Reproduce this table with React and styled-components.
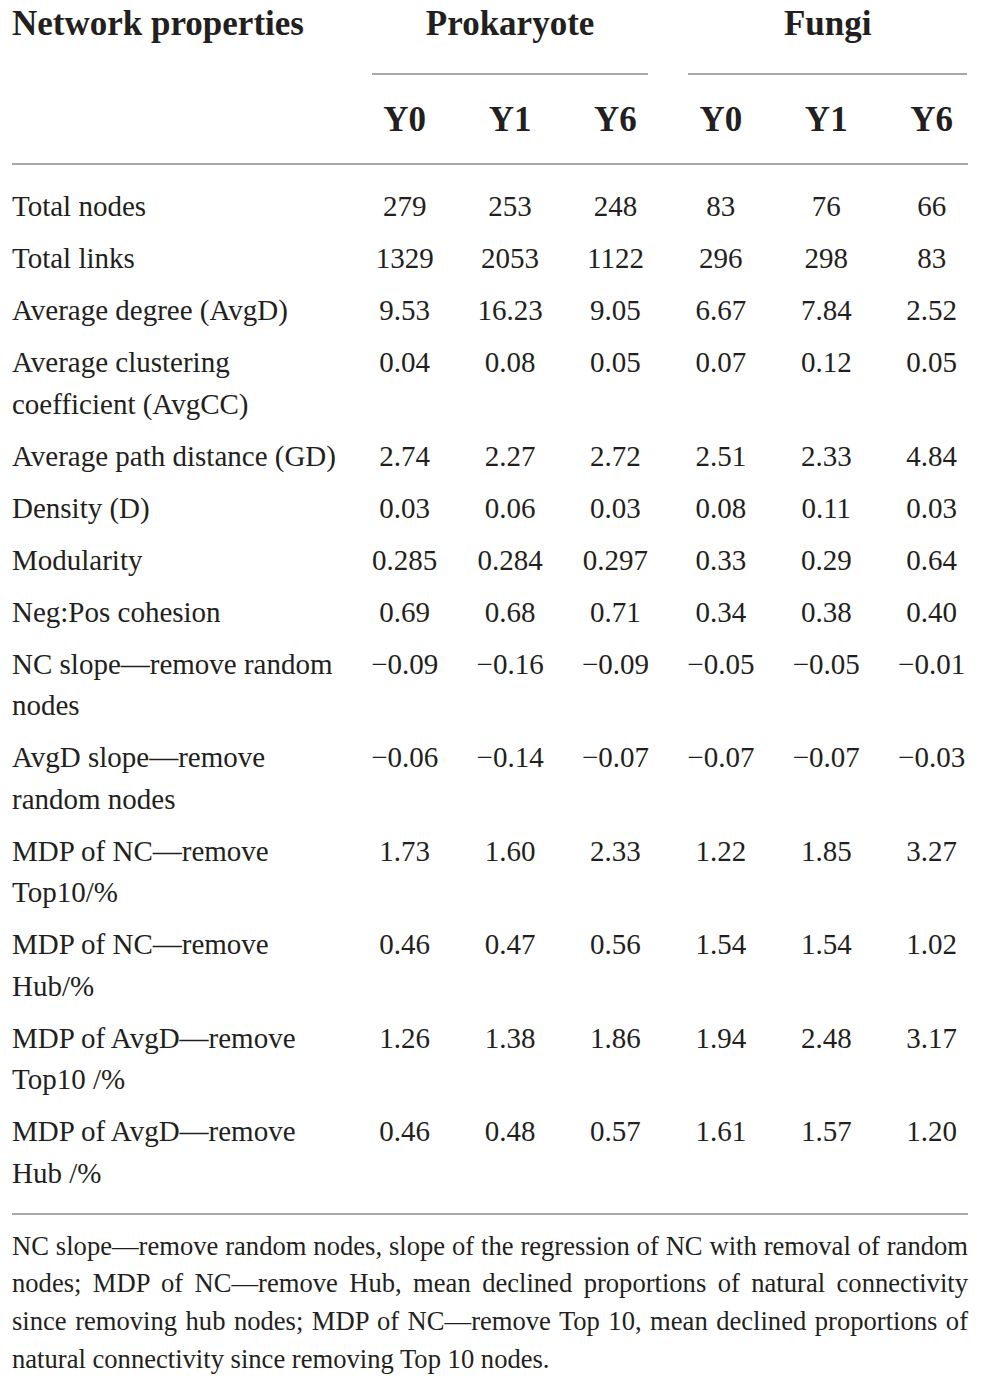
import React from "react";
import styled, { createGlobalStyle } from "styled-components";

const GlobalStyle = createGlobalStyle`
  body {
    margin: 0;
    background: #ffffff;
    color: #231f20;
    font-family: "Liberation Serif", "Times New Roman", serif;
  }
`;

const COLS = "340px repeat(6, 105.4px)";

const Page = styled.div`
  width: 956px;
  padding: 0 14px 0 12px;
`;

const HeadTop = styled.div`
  display: grid;
  grid-template-columns: ${COLS};
  font-weight: 700;
  font-size: 35px;
  line-height: 42px;
`;

const HeadLabel = styled.div`
  padding-top: 3px;
  white-space: nowrap;
`;

const GroupCell = styled.div`
  grid-column: span 3;
  margin: ${(p) => p.$margin};
  padding: 3px 0 28px;
  border-bottom: 2px solid #a8a8a8;
  text-align: center;
`;

const HeadSub = styled.div`
  display: grid;
  grid-template-columns: ${COLS};
  padding: 24px 0 22px;
  border-bottom: 2px solid #a8a8a8;
  font-weight: 700;
  font-size: 35px;
  line-height: 42px;
`;

const YearCell = styled.div`
  text-align: center;
`;

const Body = styled.div`
  padding: 16px 0 13px;
  border-bottom: 2px solid #a8a8a8;
`;

const Row = styled.div`
  display: grid;
  grid-template-columns: ${COLS};
  padding: 5.25px 0;
  font-size: 29px;
  line-height: 41.5px;
`;

const Label = styled.div`
  padding-right: 8px;
`;

const Value = styled.div`
  text-align: center;
  white-space: nowrap;
`;

const Notes = styled.div`
  padding-top: 13px;
  font-size: 26.6px;
  line-height: 37.7px;
`;

const NoteLine = styled.span`
  display: block;
  text-align: ${(p) => (p.$last ? "left" : "justify")};
  text-align-last: ${(p) => (p.$last ? "left" : "justify")};
  white-space: nowrap;
`;

const M = "\u2212";

const rows = [
  ["Total nodes", ["279", "253", "248", "83", "76", "66"]],
  ["Total links", ["1329", "2053", "1122", "296", "298", "83"]],
  ["Average degree (AvgD)", ["9.53", "16.23", "9.05", "6.67", "7.84", "2.52"]],
  ["Average clustering coefficient (AvgCC)", ["0.04", "0.08", "0.05", "0.07", "0.12", "0.05"]],
  ["Average path distance (GD)", ["2.74", "2.27", "2.72", "2.51", "2.33", "4.84"]],
  ["Density (D)", ["0.03", "0.06", "0.03", "0.08", "0.11", "0.03"]],
  ["Modularity", ["0.285", "0.284", "0.297", "0.33", "0.29", "0.64"]],
  ["Neg:Pos cohesion", ["0.69", "0.68", "0.71", "0.34", "0.38", "0.40"]],
  ["NC slope—remove random nodes", [M + "0.09", M + "0.16", M + "0.09", M + "0.05", M + "0.05", M + "0.01"]],
  ["AvgD slope—remove random nodes", [M + "0.06", M + "0.14", M + "0.07", M + "0.07", M + "0.07", M + "0.03"]],
  ["MDP of NC—remove Top10/%", ["1.73", "1.60", "2.33", "1.22", "1.85", "3.27"]],
  ["MDP of NC—remove Hub/%", ["0.46", "0.47", "0.56", "1.54", "1.54", "1.02"]],
  ["MDP of AvgD—remove Top10 /%", ["1.26", "1.38", "1.86", "1.94", "2.48", "3.17"]],
  ["MDP of AvgD—remove Hub /%", ["0.46", "0.48", "0.57", "1.61", "1.57", "1.20"]],
];

const notes = [
  "NC slope—remove random nodes, slope of the regression of NC with removal of random",
  "nodes; MDP of NC—remove Hub, mean declined proportions of natural connectivity",
  "since removing hub nodes; MDP of NC—remove Top 10, mean declined proportions of",
  "natural connectivity since removing Top 10 nodes.",
];

const years = ["Y0", "Y1", "Y6", "Y0", "Y1", "Y6"];

export default function App() {
  return (
    <>
      <GlobalStyle />
      <Page>
        <HeadTop>
          <HeadLabel>Network properties</HeadLabel>
          <GroupCell $margin="0 20px">Prokaryote</GroupCell>
          <GroupCell $margin="0 17px 0 20px">Fungi</GroupCell>
        </HeadTop>
        <HeadSub>
          <div />
          {years.map((y, i) => (
            <YearCell key={i}>{y}</YearCell>
          ))}
        </HeadSub>
        <Body>
          {rows.map(([label, vals]) => (
            <Row key={label}>
              <Label>{label}</Label>
              {vals.map((v, i) => (
                <Value key={i}>{v}</Value>
              ))}
            </Row>
          ))}
        </Body>
        <Notes>
          {notes.map((n, i) => (
            <NoteLine key={i} $last={i === notes.length - 1}>
              {n}
            </NoteLine>
          ))}
        </Notes>
      </Page>
    </>
  );
}
